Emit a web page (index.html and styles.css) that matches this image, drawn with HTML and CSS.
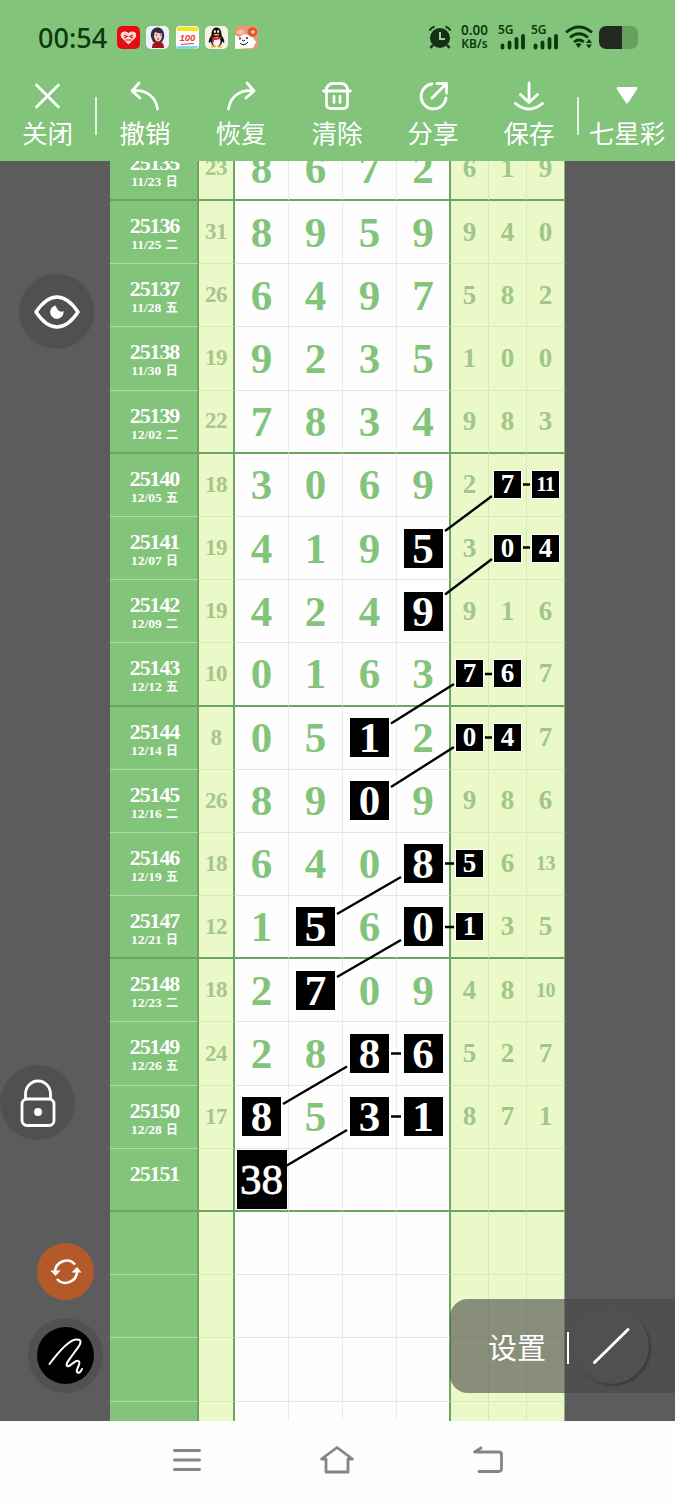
FILE: index.html
```html
<!DOCTYPE html>
<html lang="zh-CN">
<head>
    <meta charset="UTF-8">
    <meta name="viewport" content="width=device-width, initial-scale=1.0">
    <title>七星彩</title>
    <link rel="stylesheet" href="styles.css">
</head>
<body>
    <header class="header">
        <!-- Status bar -->
        <div class="status">
            <span class="clock">00:54</span>
            <div class="apps">
                <svg width="23" height="23" viewBox="0 0 23 23"><rect width="23" height="23" rx="5" fill="#e60c14"/><path d="M11.5 18.5L4.8 12C1.5 8 6 2.8 11.5 7C17 2.8 21.5 8 18.2 12Z" fill="#ffd9d9"/><path d="M7 9l3 1.5L7 12M16 9l-3 1.5 3 1.5M8.5 14h6" stroke="#e60c14" stroke-width="1.2" fill="none"/></svg>
                <svg width="23" height="23" viewBox="0 0 23 23"><rect width="23" height="23" rx="5" fill="#f0f2fa"/><path d="M5 11C4 4 8 1.5 11.5 1.5S19 4 18 12l-2 4H7Z" fill="#302c40"/><ellipse cx="12" cy="10" rx="4" ry="5.5" fill="#f3c9bd"/><path d="M6 22c0-4 2-6 4-6h4c3 0 4 3 4 6Z" fill="#a5141d"/><path d="M8 5q4 3 8 2V4L12 2Z" fill="#302c40"/><path d="M10 9h1M14 9h1" stroke="#302c40"/><path d="M11 13h2" stroke="#c22"/></svg>
                <svg width="23" height="23" viewBox="0 0 23 23"><rect width="23" height="23" rx="4" fill="#fff"/><path d="M1 5V3q0-2 3-2h15q3 0 3 2v2Z" fill="#f5e51c"/><path d="M1 20h21q-1 3-4 3H4q-3 0-3-3Z" fill="#7bd8f2"/><text x="3.5" y="15" class="hundred">100</text><path d="M5 18.5l13-1" stroke="#e33a35"/></svg>
                <svg width="23" height="23" viewBox="0 0 23 23"><rect width="23" height="23" rx="5" fill="#f5f3e4"/><path d="M6.5 9C6.5 4 8.500 1.500 11.500 1.500S16.500 4 16.500 9c2 3 3.500 6 2.500 8l-2-1.500c0 3-2 4.500-5.500 4.500S6 18.500 6 15.500L4 17c-1-2 .5-5 2.500-8Z" fill="#101014"/><ellipse cx="11.500" cy="15.500" rx="4" ry="4.500" fill="#fff"/><ellipse cx="9.800" cy="5.600" rx="1" ry="1.500" fill="#fff"/><ellipse cx="13.200" cy="5.600" rx="1" ry="1.500" fill="#fff"/><ellipse cx="11.500" cy="8.800" rx="3" ry="1" fill="#f7a01b"/><path d="M6.500 10.500q5 2.500 10 0v2q-5 2-7.500 1.200v2.500H7.200V13Z" fill="#e0202a"/><path d="M6.500 20.500h4M12.500 20.500h4" stroke="#f7a01b" stroke-width="2"/></svg>
                <svg width="23" height="23" viewBox="0 0 23 23"><rect width="23" height="23" rx="4" fill="#e69a78"/><path d="M0 23V9l4 2 5-3 8 2 4 6-3 6Z" fill="#fff"/><path d="M1 7q5-7 9-1l-4 3Z" fill="#f1c0a5"/><circle cx="17.500" cy="6" r="4.800" fill="#e2551f"/><circle cx="18" cy="6" r="1.800" fill="#ffd9b8"/><circle cx="5" cy="12.500" r="1" fill="#222"/><circle cx="12" cy="12" r="1" fill="#222"/><path d="M7 14q2 2 3 0M5 17q4 4 8-1" stroke="#222" fill="none"/></svg>
            </div>
            <svg class="alarm" width="24" height="24" viewBox="0 0 24 24"><circle cx="12" cy="13" r="10" fill="#152f15"/><path d="M1.500 5.500q2-3 5-4M22.500 5.500q-2-3-5-4" stroke="#152f15" stroke-width="2" fill="none"/><path d="M5 20l-2.500 3M19 20l2.500 3" stroke="#152f15" stroke-width="2.500"/><path d="M12 7v7h5" stroke="#9fcf9a" stroke-width="2" fill="none"/></svg>
            <div class="speed"><b>0.00</b><span>KB/s</span></div>
            <div class="signal">
                <span>5G</span>
                <svg width="25" height="16" viewBox="0 0 25 16"><path d="M2.500 11.500v2M9.500 8.500v5M16.500 5v8.500M23 2v11.500" stroke="#0d3a0d" stroke-width="3.800" stroke-linecap="round"/></svg>
            </div>
            <div class="signal">
                <span>5G</span>
                <svg width="25" height="16" viewBox="0 0 25 16"><path d="M2.500 11.500v2M9.500 8.500v5M16.500 5v8.500M23 2v11.500" stroke="#0d3a0d" stroke-width="3.800" stroke-linecap="round"/></svg>
            </div>
            <svg class="wifi" width="28" height="24" viewBox="0 0 28 24"><g fill="none" stroke="#0d3a0d" stroke-width="2.700"><path d="M1 7.500Q14-3.500 27 7.500"/><path d="M5 12.500q9-7.500 18 0"/><path d="M9 17q5-4 10 0"/></g><path d="M10.500 19q3.500-2 6 0L13.500 23Z" fill="#0d3a0d"/><path d="M21 18l3-4 3 4ZM21 19.500l3 4 3-4Z" fill="#0d3a0d"/></svg>
            <div class="battery"></div>
        </div>

        <!-- Toolbar -->
        <nav class="toolbar">
            <a class="tool"><svg class="icon" viewBox="0 0 32 32"><path d="M4.500 5l22 22M26.500 5l-22 22"/></svg>关闭</a>
            <i class="divider"></i>
            <a class="tool"><svg class="icon" viewBox="0 0 32 32"><path d="M10 3L3 11l8 7M3.500 11C17 9 27 17 28.500 29"/></svg>撤销</a>
            <a class="tool"><svg class="icon" viewBox="0 0 32 32"><path d="M22 3l7 8-8 7M28.500 11C15 9 5 17 3.500 29"/></svg>恢复</a>
            <a class="tool"><svg class="icon" viewBox="0 0 32 32"><path d="M2.500 11h27M5 11q1-7.500 7-7.500h8q6 0 7 7.500M5.500 11v13q0 4.500 4.500 4.500h12q4.500 0 4.500-4.500V11M13 16.500v6M19 16.500v6"/></svg>清除</a>
            <a class="tool"><svg class="icon" viewBox="0 0 32 32"><path d="M15 4A12.500 12.500 0 1 0 29 18M15 18L29 4M20 3.500h9.500V13"/></svg>分享</a>
            <a class="tool"><svg class="icon" viewBox="0 0 32 32"><path d="M16 3v19M7.500 14.500L16 22.500l8.500-8M2.500 23.500q13.500 11 27 0"/></svg>保存</a>
            <i class="divider"></i>
            <a class="tool"><svg class="icon" viewBox="0 0 32 32"><path d="M7 8.500h18L16 22Z" fill="#fff"/></svg>七星彩</a>
        </nav>
    </header>

    <main class="stage">
        <div class="board">
            <div class="row thick"><div class="issue"><b>25135</b><small>11/23 <i>日</i></small></div><span class="sum">23</span><span>8</span><span>6</span><span>7</span><span>2</span><span class="s">6</span><span class="s">1</span><span class="s">9</span></div>
            <div class="row"><div class="issue"><b>25136</b><small>11/25 <i>二</i></small></div><span class="sum">31</span><span>8</span><span>9</span><span>5</span><span>9</span><span class="s">9</span><span class="s">4</span><span class="s">0</span></div>
            <div class="row"><div class="issue"><b>25137</b><small>11/28 <i>五</i></small></div><span class="sum">26</span><span>6</span><span>4</span><span>9</span><span>7</span><span class="s">5</span><span class="s">8</span><span class="s">2</span></div>
            <div class="row"><div class="issue"><b>25138</b><small>11/30 <i>日</i></small></div><span class="sum">19</span><span>9</span><span>2</span><span>3</span><span>5</span><span class="s">1</span><span class="s">0</span><span class="s">0</span></div>
            <div class="row thick"><div class="issue"><b>25139</b><small>12/02 <i>二</i></small></div><span class="sum">22</span><span>7</span><span>8</span><span>3</span><span>4</span><span class="s">9</span><span class="s">8</span><span class="s">3</span></div>
            <div class="row"><div class="issue"><b>25140</b><small>12/05 <i>五</i></small></div><span class="sum">18</span><span>3</span><span>0</span><span>6</span><span>9</span><span class="s">2</span><span class="s"><em>7</em></span><span class="s two"><em>11</em></span></div>
            <div class="row"><div class="issue"><b>25141</b><small>12/07 <i>日</i></small></div><span class="sum">19</span><span>4</span><span>1</span><span>9</span><span><em>5</em></span><span class="s">3</span><span class="s"><em>0</em></span><span class="s"><em>4</em></span></div>
            <div class="row"><div class="issue"><b>25142</b><small>12/09 <i>二</i></small></div><span class="sum">19</span><span>4</span><span>2</span><span>4</span><span><em>9</em></span><span class="s">9</span><span class="s">1</span><span class="s">6</span></div>
            <div class="row thick"><div class="issue"><b>25143</b><small>12/12 <i>五</i></small></div><span class="sum">10</span><span>0</span><span>1</span><span>6</span><span>3</span><span class="s"><em>7</em></span><span class="s"><em>6</em></span><span class="s">7</span></div>
            <div class="row"><div class="issue"><b>25144</b><small>12/14 <i>日</i></small></div><span class="sum">8</span><span>0</span><span>5</span><span><em>1</em></span><span>2</span><span class="s"><em>0</em></span><span class="s"><em>4</em></span><span class="s">7</span></div>
            <div class="row"><div class="issue"><b>25145</b><small>12/16 <i>二</i></small></div><span class="sum">26</span><span>8</span><span>9</span><span><em>0</em></span><span>9</span><span class="s">9</span><span class="s">8</span><span class="s">6</span></div>
            <div class="row"><div class="issue"><b>25146</b><small>12/19 <i>五</i></small></div><span class="sum">18</span><span>6</span><span>4</span><span>0</span><span><em>8</em></span><span class="s"><em>5</em></span><span class="s">6</span><span class="s two">13</span></div>
            <div class="row thick"><div class="issue"><b>25147</b><small>12/21 <i>日</i></small></div><span class="sum">12</span><span>1</span><span><em>5</em></span><span>6</span><span><em>0</em></span><span class="s"><em>1</em></span><span class="s">3</span><span class="s">5</span></div>
            <div class="row"><div class="issue"><b>25148</b><small>12/23 <i>二</i></small></div><span class="sum">18</span><span>2</span><span><em>7</em></span><span>0</span><span>9</span><span class="s">4</span><span class="s">8</span><span class="s two">10</span></div>
            <div class="row"><div class="issue"><b>25149</b><small>12/26 <i>五</i></small></div><span class="sum">24</span><span>2</span><span>8</span><span><em>8</em></span><span><em>6</em></span><span class="s">5</span><span class="s">2</span><span class="s">7</span></div>
            <div class="row"><div class="issue"><b>25150</b><small>12/28 <i>日</i></small></div><span class="sum">17</span><span><em>8</em></span><span>5</span><span><em>3</em></span><span><em>1</em></span><span class="s">8</span><span class="s">7</span><span class="s">1</span></div>
            <div class="row thick"><div class="issue"><b>25151</b></div><span class="sum"></span><span><em class="pick">38</em></span><span></span><span></span><span></span><span class="s"></span><span class="s"></span><span class="s"></span></div>
            <div class="row"><div class="issue"></div><span class="sum"></span><span></span><span></span><span></span><span></span><span class="s"></span><span class="s"></span><span class="s"></span></div>
            <div class="row"><div class="issue"></div><span class="sum"></span><span></span><span></span><span></span><span></span><span class="s"></span><span class="s"></span><span class="s"></span></div>
            <div class="row"><div class="issue"></div><span class="sum"></span><span></span><span></span><span></span><span></span><span class="s"></span><span class="s"></span><span class="s"></span></div>
            <div class="row"><div class="issue"></div><span class="sum"></span><span></span><span></span><span></span><span></span><span class="s"></span><span class="s"></span><span class="s"></span></div>

            <!-- Lines that join the marked numbers -->
            <svg class="links" width="455" height="1260" viewBox="110 161 455 1260">
                <path d="M445 531L492 496M445 594.500L492 559M391 723.500L454 684M391 787L454 747M337 914L401 877M337 977L401 940M283 1104L347 1066.500M286 1166L347 1130"/>
                <path d="M523 484.500h7M523 547.500h7M485 674h7M485 737.500h7M445 863.500h9M445 927h9M391 1053.500h10M391 1116.500h10"/>
            </svg>
        </div>

        <!-- Floating buttons -->
        <a class="fab eye"><svg width="46" height="34" viewBox="0 0 46 34"><path d="M2 17Q12 2 23 2t21 15Q34 32 23 32T2 17Z" fill="none" stroke="#fff" stroke-width="3.400" stroke-linejoin="round"/><path d="M21.500 10.500a6.700 6.700 0 1 0 8 5.500q-3 1.500-5-.5t-3-5Z" fill="#fff"/></svg></a>
        <a class="fab lock"><svg width="36" height="48" viewBox="0 0 36 48"><g fill="none" stroke="#fff" stroke-width="2.800"><rect x="2" y="20" width="32" height="26.500" rx="5"/><path d="M5.500 20v-5a12.500 13 0 0 1 25 0v5"/></g><circle cx="18" cy="33" r="4" fill="#fff"/></svg></a>
        <a class="fab refresh"><svg width="32" height="28" viewBox="0 0 32 28"><g fill="none" stroke="#fff" stroke-width="2.500"><path d="M25 6.500A11.500 11.500 0 0 0 5 14"/><path d="M7 21A11.500 11.500 0 0 0 27 13"/></g><path d="M.5 12.500h10L5.500 18ZM21.500 14.500h10L27 9Z" fill="#fff"/></svg></a>
        <a class="fab pen"><svg width="56" height="56" viewBox="0 0 56 56"><path d="M11.500 36C19 26 30 12 38 11.500c8-.5 4 6-1 12-4 6-10 12-8 14.500 3 2 8-7 11.500-5 3.500 2-3 8-1.500 11 1 2 4 0 5-3" fill="none" stroke="#fff" stroke-width="2" stroke-linecap="round"/></svg></a>
        <div class="panel">
            <span>设置</span>
            <i></i>
            <div class="knob"><svg width="38" height="38" viewBox="0 0 38 38"><path d="M2.500 35.500L36 2.500" stroke="#fff" stroke-width="3" stroke-linecap="round"/></svg></div>
        </div>
    </main>

    <footer class="navbar">
        <svg width="28" height="24" viewBox="0 0 28 24"><path d="M1.500 2.500h25M1.500 12h25M1.500 21.500h25"/></svg>
        <svg width="36" height="30" viewBox="0 0 36 30"><path d="M7 14H2.500L18 2.500 33.500 14H29v13H7Z"/></svg>
        <svg width="32" height="28" viewBox="0 0 32 28"><path d="M9 2L2.500 6H27q2.500 0 2.500 2.500v14q0 3-3 3H7"/></svg>
    </footer>
</body>
</html>
```
FILE: styles.css
```css
* {
    box-sizing: border-box;
}
body {
    margin: 0;
    width: 675px;
    height: 1500px;
    display: flex;
    flex-direction: column;
    overflow: hidden;
    background: #fdfdfd;
    font-family: "Noto Sans", "Noto Sans CJK SC", sans-serif;
}
svg {
    display: block;
    flex: none;
}

/* Header */
.header {
    height: 161px;
    flex: none;
    background: #83c47b;
}
.status {
    height: 74px;
    padding: 0 37px 0 38px;
    display: flex;
    align-items: center;
    color: #0d3a0d;
}
.clock {
    width: 79px;
    font-size: 27px;
    font-weight: 500;
}
.apps {
    display: flex;
    gap: 6.400px;
    flex: 1;
}
.hundred {
    font: italic bold 9.500px "Liberation Sans", sans-serif;
    fill: #e33a35;
}
.alarm {
    margin-right: 7px;
}
.speed {
    width: 31px;
    display: flex;
    flex-direction: column;
    align-items: center;
    font-size: 12px;
    font-weight: 600;
    line-height: 13px;
}
.speed b {
    font-size: 13.500px;
    font-weight: 600;
    line-height: 13px;
}
.signal {
    width: 25px;
    margin-left: 10px;
    display: flex;
    flex-direction: column;
    font-size: 12px;
    font-weight: 600;
    line-height: 9px;
}
.signal span {
    margin-left: -2px;
}
.signal + .signal {
    margin-left: 8px;
}
.wifi {
    margin: 0 6px 0 7px;
}
.battery {
    width: 39px;
    height: 23px;
    border-radius: 7px;
    background: linear-gradient(to right, #222a20 23px, #67a05f 23px);
}

.toolbar {
    display: grid;
    grid-template-columns: 95px 2px repeat(5, 96px) 2px 96px;
}
.tool {
    display: flex;
    flex-direction: column;
    align-items: center;
    padding-top: 6px;
    color: #fff;
    font-family: "Noto Sans CJK SC", sans-serif;
    font-size: 25.500px;
    line-height: 36px;
    white-space: nowrap;
}
.icon {
    width: 32px;
    height: 32px;
    margin-bottom: 2px;
    fill: none;
    stroke: #fff;
    stroke-width: 2.800;
    stroke-linecap: round;
    stroke-linejoin: round;
}
.divider {
    height: 38px;
    margin-top: 23px;
    background: #e4f3e0;
}

/* Number chart */
.stage {
    position: relative;
    height: 1260px;
    flex: none;
    overflow: hidden;
    background: #5c5c5c;
}
.board {
    position: relative;
    width: 455px;
    margin: -23.200px 0 0 110px;
}
.row {
    height: 63.200px;
    display: grid;
    grid-template-columns: 89px 36px 54px 54px 54px 54px 38px 38px 38px;
    font-family: "Liberation Serif", serif;
    font-weight: bold;
    font-size: 43px;
    color: #83c47b;
    background: #fefefe;
}
.row > * {
    display: flex;
    align-items: center;
    justify-content: center;
    min-width: 0;
    border-right: 1px solid #ebebeb;
    border-bottom: 1px solid #e6e6e6;
}
.row > .issue {
    flex-direction: column;
    justify-content: flex-start;
    padding: 14px 0 0 2px;
    background: #83c47b;
    color: #fff;
    border-right: 2px solid #6da463;
    border-bottom-color: #b0dba8;
}
.issue b {
    font-size: 22px;
    line-height: 22px;
    letter-spacing: -1.100px;
}
.issue small {
    font-size: 13.500px;
    line-height: 16px;
}
.issue i {
    margin-left: 1px;
    font: bold 12px "Noto Sans CJK SC", sans-serif;
    line-height: 1;
}
.row > .sum {
    background: #ebf9c8;
    color: #a6c58f;
    font-size: 23px;
    letter-spacing: -0.500px;
    border-right: 2px solid #6da463;
    border-bottom-color: #d9e7b9;
}
.row > .s {
    background: #ebf9c8;
    color: #a0c68c;
    font-size: 27px;
    border-right-color: #d9e7b9;
    border-bottom-color: #d9e7b9;
}
.row > .two {
    font-size: 20px;
    letter-spacing: -0.500px;
}
.row > span:nth-child(6) {
    border-right: 2px solid #6da463;
}
.row > span:last-child {
    border-right: 1px solid #8fae83;
}
.row.thick > *,
.row.thick > .issue {
    border-bottom: 2px solid #6da463;
}

/* Marked numbers */
.row em {
    width: 39px;
    height: 39px;
    flex: none;
    display: flex;
    align-items: center;
    justify-content: center;
    font-style: normal;
    color: #fff;
    background: #000;
    box-shadow: 0 0 0 2px #fff;
}
.row .s em {
    width: 27px;
    height: 27px;
    box-shadow: 0 0 0 1px #fff;
}
.row em.pick {
    width: 50px;
    height: 59px;
    font-weight: normal;
    -webkit-text-stroke: 0.800px #fff;
    box-shadow: none;
}
.links {
    position: absolute;
    left: 0;
    top: 23.200px;
    fill: none;
    stroke: #000;
    stroke-width: 2.400;
}

/* Floating buttons */
.fab {
    position: absolute;
    width: 75px;
    height: 75px;
    border-radius: 50%;
    display: flex;
    align-items: center;
    justify-content: center;
    background: #505050;
}
.eye {
    left: 19px;
    top: 113px;
}
.lock {
    left: 0;
    top: 904px;
}
.refresh {
    left: 37px;
    top: 1082px;
    width: 57px;
    height: 57px;
    background: #b45a2a;
}
.pen {
    left: 37px;
    top: 1166px;
    width: 57px;
    height: 57px;
    background: #000;
    box-shadow: 0 0 0 9px #515151;
}
.panel {
    position: absolute;
    right: 0;
    top: 1138px;
    width: 225px;
    height: 94px;
    padding-left: 38px;
    display: flex;
    align-items: center;
    border-radius: 18px 0 0 18px;
    background: rgba(70, 70, 70, 0.600);
    color: #fff;
    font-family: "Noto Sans CJK SC", sans-serif;
    font-size: 29px;
}
.panel i {
    width: 2px;
    height: 32px;
    margin: 4px 0 0 21px;
    background: #fff;
}
.knob {
    width: 76px;
    height: 76px;
    margin-left: 4px;
    display: flex;
    align-items: center;
    justify-content: center;
    border-radius: 50%;
    background: #505050;
    box-shadow: 2px 2px 2px #3c3c3c;
}

/* System navigation */
.navbar {
    height: 79px;
    padding: 0 171px 2px 173px;
    display: flex;
    align-items: center;
    justify-content: space-between;
    fill: none;
    stroke: #858585;
    stroke-width: 2.800;
    stroke-linecap: round;
    stroke-linejoin: round;
}
```
